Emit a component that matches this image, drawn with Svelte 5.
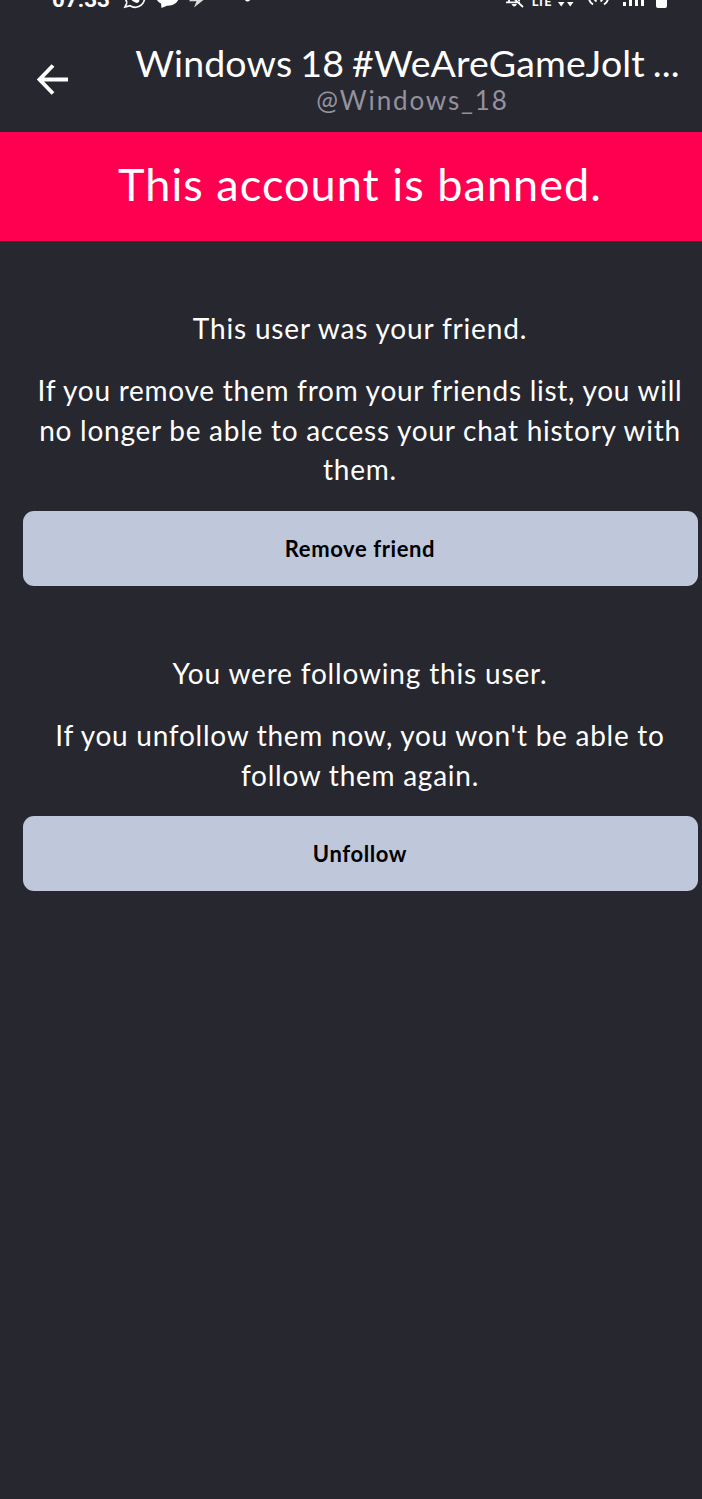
<script>
	const handle = '@Windows_18';

	const sections = [
		{
			title: 'This user was your friend.',
			lines: [
				'If you remove them from your friends list, you will',
				'no longer be able to access your chat history with',
				'them.'
			],
			action: 'Remove friend'
		},
		{
			title: 'You were following this user.',
			lines: [
				"If you unfollow them now, you won't be able to",
				'follow them again.'
			],
			action: 'Unfollow'
		}
	];
</script>

<div class="screen">
	<div class="status">
		<span class="clock">07:33</span>
		<svg class="notifications" width="132" height="20" viewBox="120 -10 132 20" aria-hidden="true">
			<path d="M127 2.5 L125 7 L130 5.7 A9.4 9.4 0 1 0 127 2.5" fill="none" stroke="#fff" stroke-width="1.7" />
			<path d="M130 -6 C128 -3 132 2 137 3 C140 2 140 0 138 -1 L136 0 L133 -3 L134 -5 Z" fill="#fff" />
			<path d="M156 -4 C156 0 158 2 161 3.5 L161.5 8 L167 5.7 C175 6 179 1 179 -4 C179 -10 156 -10 156 -4" fill="#fff" />
			<path d="M197 -9 L189 1.2 H196.5 L194 7.5 L206 -2 H199 L203 -9 Z" fill="#ddd" />
			<path d="M243.5 -3 H252 Q250 1.5 247.5 1.5 T243.5 -3" fill="#fff" />
		</svg>
		<svg class="signals" width="164" height="20" viewBox="505 -10 164 20" aria-hidden="true">
			<path d="M506 2.3 H520 M509 2 V-5 Q514 -9 519 -4 V1 M509 -6 L523 7" fill="none" stroke="#fff" stroke-width="1.8" />
			<path d="M511.5 4 H517 Q514 9 511.5 4" fill="#fff" />
			<path d="M558 2 H564.5 L561.2 6.5 Z M567 2 H573.5 L570.2 6.5 Z M558 0 L562 -3 L565 0 Z M567 0 L570 -3 L574 0 Z" fill="#fff" />
			<path d="M593 4.5 Q588 1 589 -4 M596.5 1.5 Q594 0 594 -4 M604 4.5 Q609 1 608 -4 M600.5 1.5 Q603 0 603 -4" fill="none" stroke="#fff" stroke-width="1.9" />
			<path d="M623 2 H626 V6 H623 Z M629 -1 H632 V6 H629 Z M635 -4 H638 V6 H635 Z M641 -7 H644 V6 H641 Z" fill="#fff" />
			<rect x="656" y="-10" width="11" height="18" rx="2" fill="#fff" />
		</svg>
		<span class="network">LTE</span>
	</div>

	<header>
		<button class="back" aria-label="Back">
			<svg width="34" height="34" viewBox="0 0 34 34">
				<path d="M32 17.5 H4 M17 3.5 L3.5 17.5 L17 31.5" fill="none" stroke="#fff" stroke-width="3.9" />
			</svg>
		</button>
		<div class="profile">
			<h1>Windows 18 #WeAreGameJolt ...</h1>
			<p>{handle}</p>
		</div>
	</header>

	<div class="banner">This account is banned.</div>

	<main>
		{#each sections as section}
			<section>
				<h2>{section.title}</h2>
				<div class="info">
					{#each section.lines as line}
						<p>{line}</p>
					{/each}
				</div>
				<button class="action">{section.action}</button>
			</section>
		{/each}
	</main>
</div>

<style>
	:global(body) {
		background: #272730;
	}

	.screen {
		width: 702px;
		height: 1499px;
		overflow: hidden;
		background: #272730;
		color: #fff;
		font-family: Lato, sans-serif;
		white-space: nowrap;
	}

	h1, h2, p {
		margin: 0;
		font-weight: 400;
	}

	button {
		border: 0;
		padding: 0;
		font-family: inherit;
	}

	.status {
		position: relative;
		height: 20px;
		overflow: hidden;
	}

	.status > * {
		position: absolute;
	}

	.clock {
		left: 52px;
		top: -17px;
		font: 700 22.5px/32px Roboto, sans-serif;
	}

	.notifications {
		left: 120px;
		top: -10px;
	}

	.signals {
		left: 505px;
		top: -10px;
	}

	.network {
		left: 532px;
		top: -8px;
		font: 700 12px/20px Roboto, sans-serif;
	}

	header {
		display: flex;
		height: 112px;
	}

	.back {
		width: 123px;
		padding: 42px 0 0 36px;
		background: none;
		text-align: left;
		display: flex;
	}

	.profile {
		flex: 1;
		padding-top: 20px;
		text-align: center;
	}

	h1 {
		font-size: 37.5px;
		line-height: 46px;
		margin-left: -10px;
		letter-spacing: 0.15px;
		word-spacing: -1.8px;
	}

	.profile p {
		color: #93929d;
		font-size: 26px;
		line-height: 28px;
		letter-spacing: 1.85px;
	}

	.banner {
		height: 109px;
		padding-left: 18px;
		background: #ff0050;
		font-size: 45px;
		line-height: 105px;
		letter-spacing: 1.05px;
		text-align: center;
		box-sizing: border-box;
	}

	main {
		padding: 68px 4.5px 0 22.5px;
	}

	section {
		margin-bottom: 68px;
		text-align: center;
	}

	h2, .info {
		font-size: 28px;
		line-height: 39.6px;
		letter-spacing: 0.83px;
	}

	.info {
		margin: 22.5px -10px 21px;
		letter-spacing: 0.74px;
	}

	.action {
		width: 100%;
		height: 75px;
		border-radius: 11px;
		background: #bfc7db;
		color: #000;
		font-size: 22px;
		font-weight: 700;
		letter-spacing: 0.6px;
	}
</style>
